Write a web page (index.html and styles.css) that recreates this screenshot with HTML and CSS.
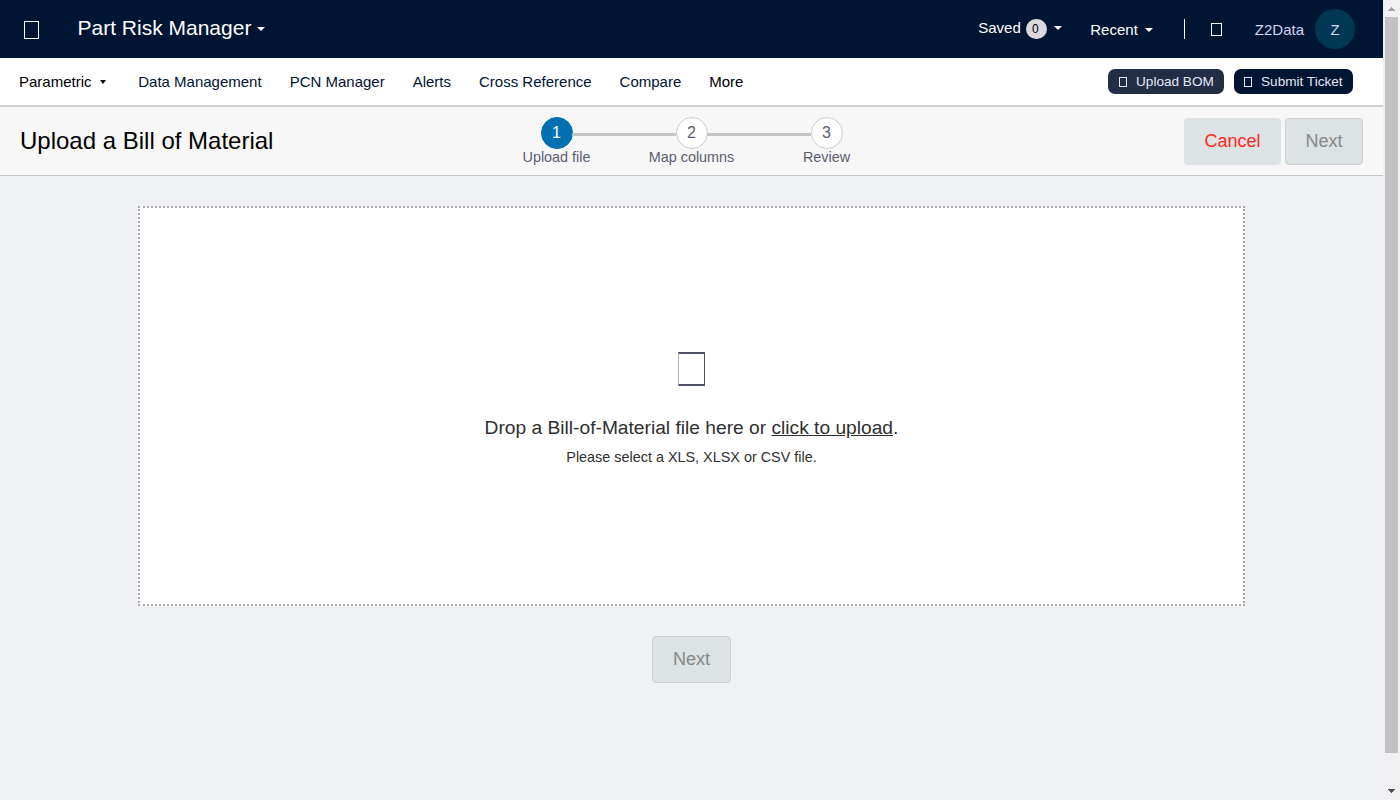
FILE: index.html
```html
<!DOCTYPE html>
<html lang="en">
<head>
<meta charset="utf-8">
<title>Part Risk Manager</title>
<link rel="stylesheet" href="styles.css">
</head>
<body>
<div class="page">
  <header class="topbar">
    <span class="box box-brand"></span>
    <span class="brand">Part Risk Manager</span><i class="caret caret-brand"></i>
    <div class="account">
      <span class="saved">Saved</span><span class="count">0</span><i class="caret caret-saved"></i>
      <span class="recent">Recent</span><i class="caret caret-recent"></i>
      <span class="divider"></span>
      <span class="box box-help"></span>
      <span class="user">Z2Data</span>
      <span class="avatar">Z</span>
    </div>
  </header>
  <nav class="nav">
    <a class="dark">Parametric<i class="caret caret-nav"></i></a>
    <a>Data Management</a>
    <a>PCN Manager</a>
    <a>Alerts</a>
    <a>Cross Reference</a>
    <a>Compare</a>
    <a class="dark">More</a>
    <div class="actions">
      <span class="pill pill-soft"><span class="box box-small"></span>Upload BOM</span>
      <span class="pill"><span class="box box-small"></span>Submit Ticket</span>
    </div>
  </nav>
  <section class="stepbar">
    <h1 class="title">Upload a Bill of Material</h1>
    <ol class="steps">
      <li class="step active"><span class="num">1</span><span class="label">Upload file</span></li>
      <li class="step"><span class="num">2</span><span class="label">Map columns</span></li>
      <li class="step"><span class="num">3</span><span class="label">Review</span></li>
    </ol>
    <div class="buttons">
      <span class="btn btn-cancel">Cancel</span>
      <span class="btn btn-top">Next</span>
    </div>
  </section>
  <main class="main">
    <div class="dropzone">
      <span class="box-upload"></span>
      <p class="drop-text">Drop a Bill-of-Material file here or <u>click to upload</u>.</p>
      <p class="drop-hint">Please select a XLS, XLSX or CSV file.</p>
    </div>
    <span class="btn">Next</span>
  </main>
</div>
<div class="scrollbar">
  <svg width="17" height="17" shape-rendering="crispEdges"><path fill="#a3a3a3" d="M8 7h1v1h1v1h1v1h1v1H5v-1h1V9h1V8h1z"/></svg>
  <div class="thumb"></div>
  <svg class="down" width="17" height="17" shape-rendering="crispEdges"><path fill="#505050" d="M5 6h7v1h-1v1h-1v1H9v1H8V9H7V8H6V7H5z"/></svg>
</div>
</body>
</html>
```
FILE: styles.css
```css
* { box-sizing: border-box; }
body {
  margin: 0;
  height: 800px;
  display: flex;
  overflow: hidden;
  background: #f0f1f4;
  font-family: "Liberation Sans", Arial, sans-serif;
  font-size: 15px;
}
.page { width: 1383px; display: flex; flex-direction: column; }

.box { display: block; flex: none; border: 1px solid currentColor; }
.box-brand { width: 15px; height: 18px; margin: 2px 39px 0 24px; }
.box-help { width: 11px; height: 13px; margin: 1px 33px 0 26px; }
.box-small { width: 8px; height: 10px; margin-right: 9px; }

.caret {
  flex: none;
  border: 4px solid transparent;
  border-top-color: currentColor;
  border-bottom: 0;
}

.topbar {
  height: 58px;
  display: flex;
  align-items: center;
  background: #001433;
  color: #fff;
}
.brand { font-size: 21px; line-height: 24px; margin: 0 0 2px -0.5px; }
.caret-brand { margin-left: 6px; }
.account { margin-left: auto; padding-right: 28px; display: flex; align-items: center; }
.saved { margin-bottom: 3px; }
.count {
  width: 21px;
  height: 20px;
  margin-left: 5px;
  border-radius: 10px;
  background: #d9d9de;
  color: #000;
  font-size: 12px;
  line-height: 20px;
  padding-right: 2px;
  text-align: center;
}
.caret-saved { margin: 0 28.5px 2px 7px; }
.recent { margin-top: 1px; }
.caret-recent { margin: 2px 31px 0 7px; }
.divider { width: 1px; height: 20px; background: #fff; }
.user { color: #d6d6f5; margin-top: 1px; }
.avatar {
  width: 40px;
  height: 40px;
  margin-left: 11px;
  border-radius: 50%;
  background: #003853;
  color: #d6d6f5;
  line-height: 42px;
  text-align: center;
}

.nav {
  height: 49px;
  padding: 0 30px 0 19px;
  display: flex;
  align-items: center;
  gap: 28px;
  background: #fff;
  border-bottom: 2px solid #d0d0d0;
  color: #001433;
}
.nav a { display: flex; align-items: center; }
.nav .dark { color: #000; }
.caret-nav { margin: 0 4.7px 0 8px; border-width: 4px 3.5px 0; }
.actions { margin-left: auto; display: flex; gap: 10px; }
.pill {
  width: 119px;
  height: 25px;
  padding-left: 10px;
  display: flex;
  align-items: center;
  border-radius: 7px;
  background: #001433;
  color: #e2e8f5;
  font-size: 13.6px;
  white-space: nowrap;
}
.pill-soft { width: 116px; padding-left: 11px; background: #242d46; }

.stepbar {
  height: 69px;
  padding: 0 20px;
  display: grid;
  grid-template-columns: 1fr 405px 1fr;
  align-items: center;
  background: #f7f7f7;
  border-bottom: 1px solid #c8c8c8;
}
.title { margin: 0; font-size: 24px; font-weight: 400; }
.steps { margin: 0; padding: 0; display: flex; list-style: none; color: #5b5d70; }
.step {
  position: relative;
  width: 135px;
  display: flex;
  flex-direction: column;
  align-items: center;
}
.step + .step::before {
  content: "";
  position: absolute;
  top: 16px;
  right: 83px;
  width: 104px;
  height: 3px;
  background: #c3c5c5;
}
.num {
  width: 32px;
  height: 32px;
  border: 1px solid #ccc;
  border-radius: 50%;
  background: #fff;
  font-size: 16px;
  line-height: 30px;
  text-align: center;
}
.active .num { background: #0070b2; border-color: #0070b2; color: #fff; }
.label { font-size: 14.4px; line-height: 17px; }
.buttons { display: flex; justify-content: flex-end; gap: 4px; }

.btn {
  height: 47px;
  padding: 0 20px;
  border: 1px solid #cfd1d1;
  border-radius: 4px;
  background: #dde2e4;
  color: #868989;
  font-size: 18px;
  line-height: 45px;
}
.btn-cancel { width: 97px; padding: 0; text-align: center; border-color: #dde2e4; color: #ff281e; }
.btn-top { width: 78px; padding: 0; text-align: center; }

.main { padding-top: 30px; display: flex; flex-direction: column; align-items: center; gap: 30px; }
.dropzone {
  width: 1107px;
  height: 400px;
  display: flex;
  flex-direction: column;
  align-items: center;
  padding-top: 144px;
  background: #fff;
  border: 2px dotted #aaa;
  color: #2f2f2f;
}
.box-upload {
  width: 27px;
  height: 34px;
  border: solid #4e5164;
  border-width: 2px 1px;
  border-left-color: #b5b6c0;
}
.drop-text { margin: 30px 0 0; font-size: 19.2px; line-height: 24px; }
.drop-hint { margin: 8px 0 0; font-size: 14.4px; line-height: 18px; }

.scrollbar { width: 17px; background: #f1f1f1; display: flex; flex-direction: column; }
.scrollbar svg { display: block; }
.thumb { width: 13px; height: 736px; margin-left: 2px; background: #c1c1c1; }
.down { margin-top: auto; }
```
